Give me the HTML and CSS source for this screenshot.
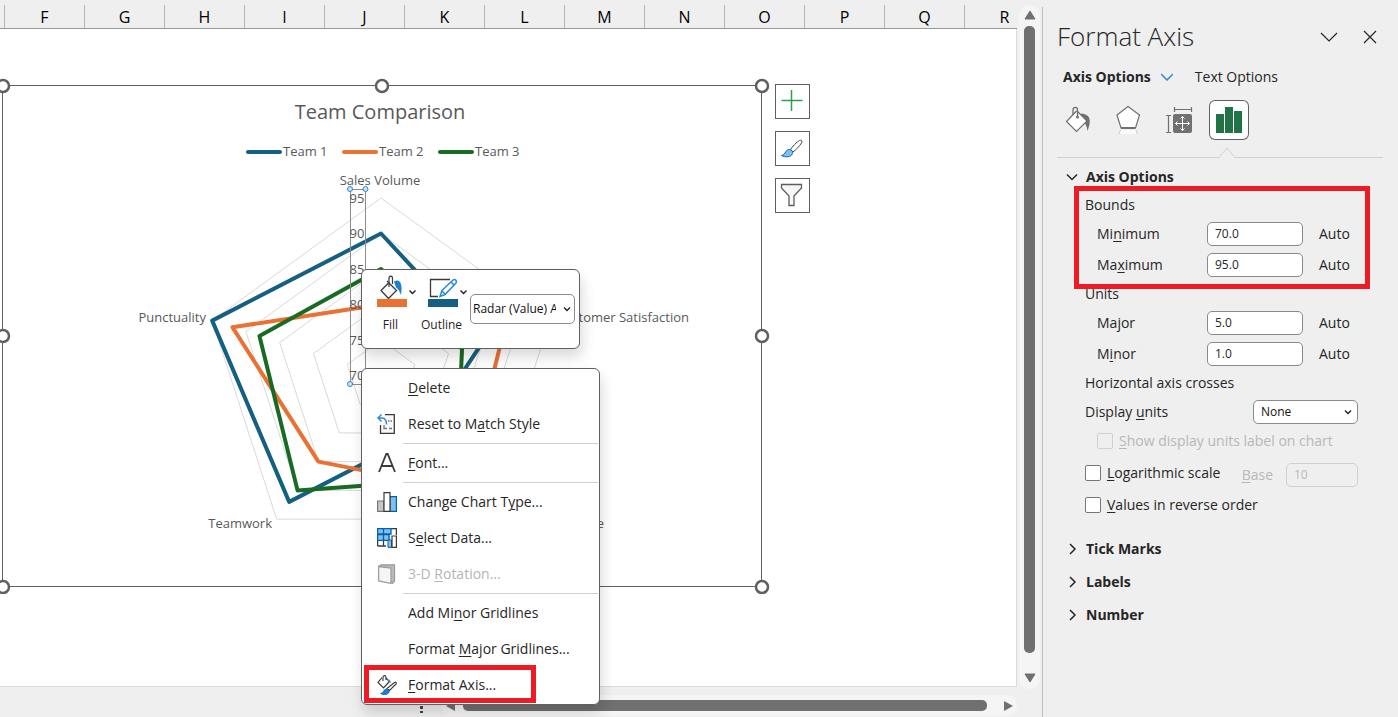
FILE: index.html
```html
<!DOCTYPE html>
<html lang="en">
<head>
    <meta charset="UTF-8">
    <meta name="viewport" content="width=device-width, initial-scale=1.0">
    <title>Team Comparison</title>
    <link rel="stylesheet" href="styles.css">
</head>
<body>
    <main class="workbook">
        <section class="sheet">
            <div class="columns">
                <span class="edge"></span><span>F</span><span>G</span><span>H</span><span>I</span><span>J</span><span>K</span><span>L</span><span>M</span><span>N</span><span>O</span><span>P</span><span>Q</span><span>R</span>
            </div>
            <div class="cells">
                <svg class="chart" viewBox="0 78 770 516" role="img" aria-label="Team Comparison radar chart">
                    <rect class="frame" x="2.5" y="85.5" width="759" height="501"/>
                    <text class="title" x="380" y="119">Team Comparison</text>
                    <g class="legend">
                        <path class="team1" d="M248 152H280"/><text x="283" y="156">Team 1</text>
                        <path class="team2" d="M344 152H376"/><text x="379" y="156">Team 2</text>
                        <path class="team3" d="M440 152H472"/><text x="475" y="156">Team 3</text>
                    </g>
                    <g class="grid" id="grid"></g>
                    <g class="series" id="series"></g>
                    <g class="axis">
                        <rect x="350.5" y="189.5" width="15" height="195"/>
                        <text x="357" y="203">95</text>
                        <text x="357" y="238">90</text>
                        <text x="357" y="274">85</text>
                        <text x="357" y="309">80</text>
                        <text x="357" y="345">75</text>
                        <text x="357" y="380">70</text>
                        <circle cx="350" cy="189" r="2.5"/><circle cx="365.500" cy="189" r="2.5"/><circle cx="350" cy="384" r="2.5"/>
                    </g>
                    <g class="category">
                        <text x="380" y="185" text-anchor="middle">Sales Volume</text>
                        <text x="689" y="322" text-anchor="end">Customer Satisfaction</text>
                        <text x="604" y="528" text-anchor="end">Knowledge</text>
                        <text x="272" y="528" text-anchor="end">Teamwork</text>
                        <text x="206" y="322" text-anchor="end">Punctuality</text>
                    </g>
                    <g class="handles">
                        <circle cx="3" cy="86" r="6"/><circle cx="382" cy="86" r="6"/><circle cx="762" cy="86" r="6"/>
                        <circle cx="3" cy="336" r="6"/><circle cx="762" cy="336" r="6"/>
                        <circle cx="3" cy="587" r="6"/><circle cx="762" cy="587" r="6"/>
                    </g>
                </svg>
                <div class="chart-tools">
                    <button type="button" aria-label="Chart elements"><svg viewBox="0 0 33 33"><path d="M5.500 15.500H26.500M15.500 5V26" stroke="#2f9e4f" stroke-width="1.500"/></svg></button>
                    <button type="button" aria-label="Chart styles"><svg viewBox="0 0 33 33"><path d="M14.500 17.500C18 12.500 22.500 8.500 24.500 8.200C26 8 26.500 9.500 25.500 11C23.500 14 20.500 17.500 17 20z" fill="#fff" stroke="#484644"/><path d="M5.500 23.500C9 23 9 19.500 11.500 18C14 16.500 17.500 18.500 16.500 21.500C15 25.500 9 25.500 5.500 23.500z" fill="#83beec" stroke="#0063b1"/></svg></button>
                    <button type="button" aria-label="Chart filters"><svg viewBox="0 0 33 33"><path d="M5.500 5.500H25.500V9L18 17V26.500H13V17L5.500 9z" fill="#f7f7f7" stroke="#605e5c" stroke-width="1.300"/></svg></button>
                </div>
            </div>
            <div class="hscroll">
                <svg class="grip" viewBox="0 0 4 12"><path d="M0 0h3v3H0zM0 5h3v3H0zM0 10h3v2H0z" fill="#444"/></svg>
                <div class="track">
                    <svg viewBox="0 0 12 12"><path d="M10 1v10L1 6z" fill="#707070"/></svg>
                    <span class="thumb"></span>
                    <svg viewBox="0 0 12 12"><path d="M2 1v10l9-5z" fill="#707070"/></svg>
                </div>
            </div>
        </section>
        <div class="vscroll">
            <svg viewBox="0 0 12 12"><path d="M6 2l5 8H1z" fill="#707070" stroke="#707070" stroke-linejoin="round"/></svg>
            <span class="thumb"></span>
            <svg viewBox="0 0 12 12"><path d="M6 10l5-8H1z" fill="#707070" stroke="#707070" stroke-linejoin="round"/></svg>
        </div>

        <div class="mini-toolbar">
            <button type="button" class="tool">
                <svg viewBox="0 0 42 32"><path d="M10 6l9.500 9.500-8 8L4 15.500l8-8" fill="#f7f7f7" stroke="#3b3a39" stroke-width="1.300"/><path d="M12 12V3.500C12 .2 15.500.2 15.500 3.500V9" fill="none" stroke="#3b3a39" stroke-width="1.200"/><path d="M17 6.500C23 3 26 9 24 20C22.500 17 22 14 19 12.500" fill="#1f7fd0"/><path d="M0 24h30v8H0z" fill="#e97132"/><path d="M32.500 15.500l3 3 3-3" fill="none" stroke="#222" stroke-width="1.400"/></svg>
                <span>Fill</span>
            </button>
            <button type="button" class="tool">
                <svg viewBox="0 0 42 32"><path d="M10 21.500H2.500V4.500H22" fill="none" stroke="#3b3a39" stroke-width="1.300"/><path d="M12 21.500l2-6L25 5c2-1.500 4.500.8 3 3L17 19.500z M14 16l3 3M23 7l3 3" fill="#fff" stroke="#2b88d8" stroke-width="1.500"/><path d="M0 24h30v8H0z" fill="#156082"/><path d="M32.500 15.500l3 3 3-3" fill="none" stroke="#222" stroke-width="1.400"/></svg>
                <span>Outline</span>
            </button>
            <span class="picker">
                <select aria-label="Chart element"><option>Radar (Value) Axis</option></select>
                <svg viewBox="0 0 10 10"><path d="M2 3.500l3 3 3-3" fill="none" stroke="#222" stroke-width="1.400"/></svg>
            </span>
        </div>

        <div class="menu" role="menu">
            <button type="button" role="menuitem"><i></i><span><u>D</u>elete</span></button>
            <button type="button" role="menuitem"><svg viewBox="0 0 20 20"><path d="M8 .7H17.300V19.300H3.500V11" fill="#fafafa" stroke="#3b3a39" stroke-width="1.300"/><path d="M4.500.5L1 4l3.500 3.500M1.300 4H5C8.500 4 9.500 7 9.500 10.500" fill="none" stroke="#2b88d8" stroke-width="1.400"/><path d="M11 7h1.500M13.500 7h1.500M7 11v3.500h3M12 14.500h3" stroke="#777" stroke-width="1.300" fill="none"/></svg><span>Reset to M<u>a</u>tch Style</span></button>
            <hr>
            <button type="button" role="menuitem"><svg viewBox="0 0 20 20"><path d="M2 19L9.300 1h1.400L18 19M4.700 13H15.300" fill="none" stroke="#3b3a39" stroke-width="1.800"/></svg><span><u>F</u>ont...</span></button>
            <hr>
            <button type="button" role="menuitem"><svg viewBox="0 0 20 20"><path d="M.6 9H7V19.400H.6z" fill="#c8c6c4" stroke="#797775" stroke-width="1.200"/><path d="M13 4.600h6.400V19.400H13z" fill="#83beec" stroke="#0063b1" stroke-width="1.200"/><path d="M7 .6h6V19.400H7z" fill="#fff" stroke="#3b3a39" stroke-width="1.200"/></svg><span>Change Chart T<u>y</u>pe...</span></button>
            <button type="button" role="menuitem"><svg viewBox="0 0 20 20"><path d="M.6.600H19.400V5H13V12.500H.6z" fill="#83beec"/><path d="M.6 12.500H9V18H.6z" fill="#fff"/><path d="M14 1.200h5V6h-5z" fill="#fff"/><path d="M.6 18V12.500M6.500 12.500V18M.6 18H9M14 .6h5.400V7" fill="none" stroke="#3b3a39" stroke-width="1.300"/><path d="M.6.600H14V6H.6zM.6 6.500H12V12.400H.6zM6.500.6V12.400" fill="none" stroke="#0063b1" stroke-width="1.300"/><path d="M11 12h3.500v7.400H11z" fill="#83beec" stroke="#0063b1"/><path d="M15 8h4.400V19.400H15z" fill="#fff" stroke="#3b3a39" stroke-width="1.200"/></svg><span>S<u>e</u>lect Data...</span></button>
            <button type="button" role="menuitem" disabled><svg viewBox="0 0 20 20"><path d="M1.600 2.500L4 .800H17.500V17L15.500 19.500z" fill="#bbb" stroke="#999" stroke-width="1.200"/><path d="M1.600 2.500L14 4V19.400L1.600 17z" fill="#f5f5f5" stroke="#a0a0a0" stroke-width="1.300"/></svg><span>3-D <u>R</u>otation...</span></button>
            <hr>
            <button type="button" role="menuitem"><i></i><span>Add Mi<u>n</u>or Gridlines</span></button>
            <button type="button" role="menuitem"><i></i><span>Format <u>M</u>ajor Gridlines...</span></button>
            <button type="button" role="menuitem" class="marked"><svg viewBox="0 0 20 20"><path d="M5 2.500L1 7.500L6.500 13L12.500 6.500L9 3" fill="#fafafa" stroke="#3b3a39" stroke-width="1.200"/><path d="M6 6V2.500C6 0 9 0 9 2.500V5" fill="none" stroke="#3b3a39" stroke-width="1.100"/><path d="M10 4.500c3-.5 4 1.500 3.500 4z" fill="#2b88d8"/><path d="M10 13.500L17.500 7.500C19 6.500 20 8 19 9L12.500 15.500z" fill="#fff" stroke="#3b3a39" stroke-width="1.100"/><path d="M3.500 18.500C7 18 6 14.500 9.500 14C12.500 14 13 17 11 18.500C9 20 6 20 3.500 18.500z" fill="#1f7fd0" stroke="#0063b1" stroke-width=".8"/></svg><span><u>F</u>ormat Axis...</span></button>
        </div>
    </main>

    <aside class="pane">
        <header class="pane-head">
            <h1>Format Axis</h1>
            <button type="button" aria-label="Task pane options"><svg viewBox="0 0 20 20"><path d="M2 6l8 8 8-8" fill="none" stroke="#262626" stroke-width="1.200"/></svg></button>
            <button type="button" aria-label="Close"><svg viewBox="0 0 20 20"><path d="M4 4l12 12M16 4L4 16" fill="none" stroke="#262626" stroke-width="1.200"/></svg></button>
        </header>
        <nav class="tabs">
            <button type="button" class="current">Axis Options <svg viewBox="0 0 12 12"><path d="M0 3l6 6 6-6" fill="none" stroke="#2b88d8" stroke-width="1.500"/></svg></button>
            <button type="button">Text Options</button>
        </nav>
        <div class="groups">
            <button type="button" aria-label="Fill &amp; Line"><svg viewBox="-1 0 40 40"><path d="M21 13.500C30 14 32 20 27.500 31C27 26 25 22 21.500 20z" fill="#707070"/><path d="M16.500 11L6.500 21.500L16.500 31.500L27 21L17 11" fill="#fff" stroke="#707070" stroke-width="1.200"/><path d="M13 15V10C13 6.500 17.500 6.500 17.500 10V17" fill="none" stroke="#707070" stroke-width="1.300"/><circle cx="17.500" cy="17" r="1.500" fill="#707070"/></svg></button>
            <button type="button" aria-label="Effects"><svg viewBox="1 0 40 40"><path d="M20 6.500L31.500 15L27.500 28H13L9 15z" fill="#fff" stroke="#707070" stroke-width="1.200"/><path d="M13 28H27.500" stroke="#707070" stroke-width="2"/><path d="M12.500 30H28L29.500 34H11z" fill="#fafafa"/><path d="M12.500 30L11 34M28 30l1.500 4" stroke="#ccc"/></svg></button>
            <button type="button" aria-label="Size &amp; Properties"><svg viewBox="1 0 40 40"><rect x="15" y="14" width="19" height="19" rx="2" fill="#707070"/><path d="M16.500 9.500H33M16.500 7v5M33.500 7v5M10.500 15.500V32.500M8 15.500h5M8 32.500h5" stroke="#707070" stroke-width="1.200"/><path d="M17.500 23.500h14M24.500 16.500v14M19.500 21.500l-2 2 2 2M29.500 21.500l2 2-2 2M22.500 18.500l2-2 2 2M22.500 28.500l2 2 2-2" fill="none" stroke="#fff"/></svg></button>
            <button type="button" aria-label="Axis Options" class="selected"><svg viewBox="0 0 40 40"><path d="M7 14h8v19H7zM16 7h8v26h-8zM25 11h8v22h-8z" fill="#217346"/></svg></button>
        </div>
        <div class="divider"><svg viewBox="0 0 18 11"><path d="M0 10.500h1L9 1l8 9.500h1V11H0z" fill="#efefef"/><path d="M0 10.500h1L9 1l8 9.500h1" fill="none" stroke="#d0d0d0"/></svg></div>

        <button type="button" class="section"><svg viewBox="0 0 12 12"><path d="M1 3.500l5 5 5-5"/></svg>Axis Options</button>
        <form class="options">
            <div class="bounds">
                <p>Bounds</p>
                <div class="value"><label for="min">Mi<u>n</u>imum</label><input type="text" id="min" value="70.0"><span>Auto</span></div>
                <div class="value"><label for="max">Ma<u>x</u>imum</label><input type="text" id="max" value="95.0"><span>Auto</span></div>
            </div>
            <p>Units</p>
            <div class="value"><label for="major">Ma<u>j</u>or</label><input type="text" id="major" value="5.0"><span>Auto</span></div>
            <div class="value"><label for="minor">M<u>i</u>nor</label><input type="text" id="minor" value="1.0"><span>Auto</span></div>
            <p>Horizontal axis crosses</p>
            <div class="units">
                <label for="units">Display <u>u</u>nits</label>
                <span class="picker">
                    <select id="units"><option>None</option></select>
                    <svg viewBox="0 0 10 10"><path d="M2 3.500l3 3 3-3" fill="none" stroke="#222" stroke-width="1.400"/></svg>
                </span>
            </div>
            <div class="check nested off"><input type="checkbox" id="show" disabled><label for="show"><u>S</u>how display units label on chart</label></div>
            <div class="check log">
                <input type="checkbox" id="log"><label for="log"><u>L</u>ogarithmic scale</label>
                <span class="base off"><label for="base"><u>B</u>ase</label><input type="text" id="base" value="10" disabled></span>
            </div>
            <div class="check"><input type="checkbox" id="reverse"><label for="reverse"><u>V</u>alues in reverse order</label></div>
        </form>
        <button type="button" class="section"><svg viewBox="0 0 12 12"><path d="M4 1l5 5-5 5"/></svg>Tick Marks</button>
        <button type="button" class="section"><svg viewBox="0 0 12 12"><path d="M4 1l5 5-5 5"/></svg>Labels</button>
        <button type="button" class="section"><svg viewBox="0 0 12 12"><path d="M4 1l5 5-5 5"/></svg>Number</button>
    </aside>

    <script>
const SVG_NS = "http://www.w3.org/2000/svg";
const center = { x: 381, y: 375.5 };
const min = 70;
const unit = 7.1; // length of one axis unit

// order: sales, satisfaction, knowledge, teamwork, punctuality
const teams = [
  { name: "team1", values: [90, 85, 80, 92, 95] },
  { name: "team2", values: [80, 88, 90, 85, 92] },
  { name: "team3", values: [85, 82, 88, 90, 88] }
];

function polygon(values, parent, name) {
  let points = values.map((v, i) => {
    let a = i * 2 * Math.PI / 5;
    let r = (v - min) * unit;
    return `${center.x + r * Math.sin(a)},${center.y - r * Math.cos(a)}`;
  });
  let p = document.createElementNS(SVG_NS, "polygon");
  p.setAttribute("points", points.join(" "));
  if (name) p.setAttribute("class", name);
  parent.appendChild(p);
}

for (let v = 75; v <= 95; v += 5) {
  polygon([v, v, v, v, v], document.getElementById("grid"));
}
teams.forEach(t => polygon(t.values, document.getElementById("series"), t.name));
    </script>
</body>
</html>
```
FILE: styles.css
```css
*,*::after{box-sizing:border-box}
body{
  margin:0;
  display:flex;
  height:100vh;
  overflow:hidden;
  background:#efefef;
  color:#262626;
  font:14px/20px "Open Sans","Noto Sans",sans-serif;
}
button,input,select{font:inherit;color:inherit;}
button{background:none;border:0;padding:0;text-align:left;}
p,h1{margin:0;font-weight:400;}
u{text-underline-offset:2px;text-decoration-thickness:1px;}
svg{display:block;flex:none;}

/* sheet */
.workbook{position:relative;flex:1;min-width:0;display:flex;}
.sheet{flex:1;min-width:0;display:flex;flex-direction:column;}
.columns{
  display:flex;
  height:29px;
  padding-top:5px;
  overflow:hidden;
  border-bottom:1px solid #999;
  color:#000;
  font-size:16px;
  line-height:24px;
}
.columns span{flex:none;width:80px;text-align:center;border-right:1px solid #b5b5b5;}
.columns .edge{width:5px;}
.cells{
  position:relative;
  flex:1;
  overflow:hidden;
  background:#fff;
  border-right:1px solid #dcdcdc;
  border-bottom:1px solid #dcdcdc;
}
.hscroll{display:flex;height:30px;padding:8px 0 0 420px;gap:18px;}
.grip{width:4px;height:12px;margin-top:6px;}
.track{
  flex:1;
  display:flex;
  align-items:center;
  gap:6px;
  height:21px;
  padding:0 3px;
  border-radius:10px;
  background:#f5f5f5;
}
.track svg{width:12px;height:12px;}
.track .thumb{flex:1;height:11px;margin-right:9px;border-radius:5px;background:#707070;}
.vscroll{
  width:21px;
  margin:5px 2px 28px;
  display:flex;
  flex-direction:column;
  align-items:center;
  gap:5px;
  padding:4px 0 5px;
  border-radius:10px;
  background:#f5f5f5;
}
.vscroll svg{width:12px;height:12px;}
.vscroll .thumb{flex:1;width:11px;margin-bottom:14px;border-radius:5px;background:#707070;}

/* chart */
.chart{
  position:absolute;
  left:0;
  top:49px;
  width:770px;
  height:516px;
  fill:#595959;
  font-family:"Open Sans","Noto Sans",sans-serif;
  font-size:13px;
}
.frame{fill:#fff;stroke:#606060;}
.title{font-size:20px;text-anchor:middle;}
.legend path{stroke-width:4;stroke-linecap:round;}
.grid{fill:none;stroke:#d9d9d9;}
.series{fill:none;stroke-width:4;stroke-linejoin:round;}
.team1{stroke:#156082;}
.team2{stroke:#e97132;}
.team3{stroke:#196b24;}
.axis{text-anchor:middle;}
.axis rect{fill:none;stroke:#8c8c8c;}
.axis circle{fill:#cce4f7;stroke:#2b88d8;}
.handles{fill:#fff;stroke:#606060;stroke-width:2.5;}
.chart-tools{
  position:absolute;
  left:775px;
  top:55px;
  display:flex;
  flex-direction:column;
  gap:12px;
}
.chart-tools button{width:35px;height:35px;background:#fff;border:1px solid #606060;}

/* floating toolbar and menu */
.mini-toolbar,.menu{
  position:absolute;
  left:361px;
  background:#fff;
  border:1px solid #606060;
  border-radius:6px;
  box-shadow:2px 8px 14px rgba(0,0,0,.15);
}
.mini-toolbar{
  top:269px;
  width:219px;
  height:80px;
  display:flex;
  align-items:flex-start;
  padding:5px 4px 5px 15px;
}
.tool{width:42px;margin-right:9px;font-size:12px;}
.tool + .picker{margin-left:-9px;}
.tool svg{width:42px;height:32px;}
.tool span{display:flex;justify-content:center;width:27px;margin-top:8px;}
.picker{position:relative;display:block;}
.picker select{
  appearance:none;
  width:105px;
  height:24px;
  padding:0 18px 0 7px;
  background:#fff;
  border:1px solid #8a8a8a;
  border-radius:5px;
  font-size:12px;
  color:#111;
}
.picker svg{position:absolute;right:5px;top:7px;width:10px;height:10px;}
.mini-toolbar .picker{margin-top:19px;}
.mini-toolbar .picker select{height:30px;padding-left:2px;}
.mini-toolbar .picker svg{top:10px;right:3px;}
.menu{top:368px;width:239px;padding:1px;}
.menu button{
  position:relative;
  display:flex;
  align-items:center;
  gap:11px;
  width:100%;
  height:36px;
  padding-left:14px;
}
.menu button:disabled{color:#b5b5b5;}
.menu svg,.menu i{flex:none;width:20px;height:20px;}
.menu hr{margin:1px 0 1px 40px;border:0;border-top:1px solid #d0d0d0;}
.marked::after,.bounds::after{
  content:"";
  position:absolute;
  border:5px solid #ed1c24;
  pointer-events:none;
}
.marked::after{left:1px;top:-2px;width:172px;height:38px;}

/* format pane */
.pane{
  width:356px;
  margin-top:7px;
  padding:12px 15px 0 14px;
  border-left:1px solid #c0c0c0;
}
.pane-head{display:flex;align-items:center;gap:21px;height:36px;padding-right:3px;}
.pane-head h1{flex:1;font-size:26px;line-height:34px;padding-bottom:2px;font-weight:300;}
.pane-head svg{width:20px;height:20px;}
.tabs{display:flex;gap:22px;height:28px;margin-top:8px;padding-left:6px;}
.tabs button{display:flex;align-items:center;gap:10px;}
.tabs svg{width:12px;height:12px;}
.current,.section{font-weight:700;}
.groups{display:flex;gap:10px;margin-top:9px;padding-left:2px;}
.groups button{width:40px;height:40px;}
.groups svg{width:40px;height:40px;}
.groups .selected{background:#fff;border-radius:6px;box-shadow:inset 0 0 0 1px #606060;}
.divider{height:18px;padding:7px 0 0 161px;border-bottom:1px solid #d0d0d0;}
.divider svg{width:18px;height:11px;}
.section{display:flex;align-items:center;gap:8px;width:100%;height:33px;padding-left:9px;}
.divider + .section{margin-top:4px;height:29px;}
.section svg{width:12px;height:12px;fill:none;stroke:#262626;stroke-width:1.5;}
.options{padding:0 23px 13px 28px;}
.options p{height:27px;line-height:27px;}
.bounds{position:relative;}
.bounds::after{left:-11px;right:-10px;top:-5px;bottom:-9px;}
.value{display:flex;align-items:center;height:31px;padding-left:12px;}
.value label{width:110px;}
.value span{margin-left:16px;}
.options input[type=text]{
  width:96px;
  height:24px;
  padding:0 7px;
  background:#fff;
  border:1px solid #8a8a8a;
  border-radius:5px;
  font-size:12px;
}
.units{display:flex;align-items:center;justify-content:space-between;height:31px;padding-right:2px;}
.check{display:flex;align-items:center;gap:6px;height:28px;}
.check input[type=checkbox]{
  appearance:none;
  flex:none;
  width:16px;
  height:16px;
  margin:0;
  background:#fff;
  border:1px solid #777;
  border-radius:2px;
}
.nested{padding-left:12px;}
.log{height:36px;}
.off{color:#b8b8b8;}
.off input[type=checkbox],.options .off input[type=text]{background:none;border-color:#d0d0d0;}
.base{display:flex;align-items:center;gap:13px;margin-left:auto;padding:3px 2px 0 0;}
.options .base input[type=text]{width:72px;}
```
